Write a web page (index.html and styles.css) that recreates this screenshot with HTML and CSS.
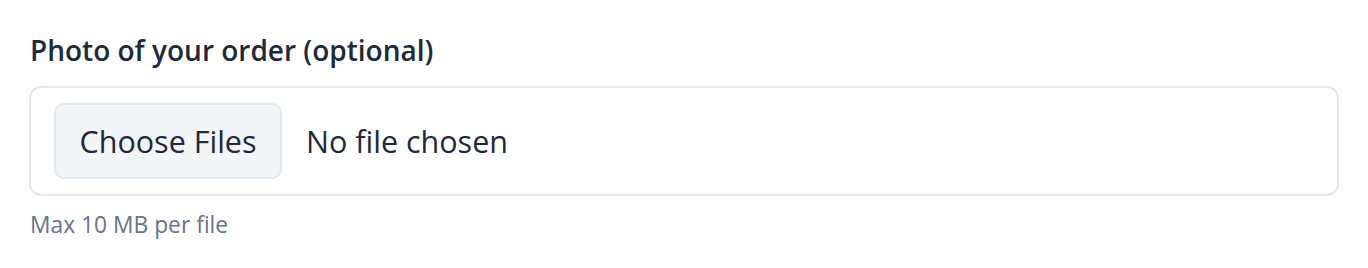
FILE: index.html
```html
<!DOCTYPE html>
<html lang="en">
<head>
<meta charset="utf-8">
<title>Upload</title>
<link rel="stylesheet" href="styles.css">
</head>
<body>
<div class="field">
  <label class="label">Photo of your order (optional)</label>
  <div class="file-box">
    <span class="file-btn">Choose Files</span>
    <span class="file-status">No file chosen</span>
  </div>
  <p class="hint">Max 10 MB per file</p>
</div>
</body>
</html>
```
FILE: styles.css
```css
html, body {
  margin: 0;
  padding: 0;
  background: #ffffff;
}
body {
  font-family: "Open Sans", "Noto Sans", sans-serif;
  color: #1e293b;
}
.field {
  padding: 30px 29px 0 29px;
  display: flex;
  flex-direction: column;
}
.label {
  display: block;
  font-size: 28px;
  font-weight: 600;
  line-height: 40px;
  color: #1e293b;
  padding-left: 1px;
  margin-bottom: 16px;
}
.file-box {
  display: flex;
  align-items: center;
  gap: 24px;
  border: 2px solid #e4e8ef;
  border-radius: 12px;
  padding: 15px 23px;
  height: 76px;
}
.file-btn {
  display: flex;
  align-items: center;
  height: 76px;
  box-sizing: border-box;
  padding: 0 23.5px;
  background: #f3f5f6;
  border: 2px solid #e1e7ef;
  border-radius: 10px;
  font-size: 30.5px;
  color: #1e293b;
}
.file-status {
  font-size: 30.5px;
  color: #1e293b;
}
.hint {
  margin: 14px 0 0 1px;
  font-size: 22.8px;
  line-height: 30px;
  color: #64748b;
}
```
